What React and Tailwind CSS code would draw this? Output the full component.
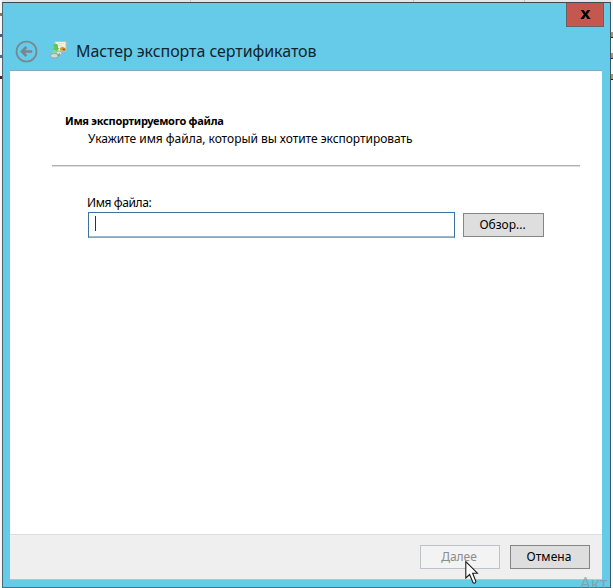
import React from 'react';

const leftMarks = [
  { id: 'a', className: 'mt-[13px] bg-[#8a7a5c]' },
  { id: 'b', className: 'mt-[18px] bg-[#4a5f8f]' },
  { id: 'c', className: 'mt-[18px] bg-[#4b6b9c]' },
  { id: 'd', className: 'mt-[18px] bg-[#4a1f2e]' },
];

export default function App() {
  return (
    <div className="relative flex h-[588px] w-[613px] overflow-hidden bg-[#f8f8f8] font-['Noto_Sans','Open_Sans',sans-serif] text-black">
      <div className="w-[2px] shrink-0">
        {leftMarks.map((mark) => (
          <div key={mark.id} className={`h-[3px] w-[2px] ${mark.className}`} />
        ))}
      </div>
      <div className="flex min-w-0 flex-1 flex-col">
        <TableEdge />
        <Wizard />
      </div>
      <RightEdge />
      <svg className="absolute top-[560px] left-[465px]" width="15" height="26" viewBox="0 0 15 26">
        <path d="M.8 1.5V18L4.6 14.5L7.9 22.2Q8.5 23.6 9.8 23L10.3 22.6Q11.1 22 10.6 20.7L7.6 13.2H12.4Z" fill="#fff" stroke="#1b1b1b" strokeWidth="1.1" />
      </svg>
      <div className="absolute top-[573px] left-[580px] text-[17px] leading-5 whitespace-nowrap text-[#8b9499]/70">Акт</div>
    </div>
  );
}

function TableEdge() {
  return (
    <div className="flex h-[2px] shrink-0 bg-[#e6e6e6]">
      <div className="w-[189px] border-r border-[#c4c4c4]" />
      <div className="w-[223px] border-r border-[#c4c4c4]" />
      <div className="w-[111px] border-r border-[#c4c4c4]" />
    </div>
  );
}

function Wizard() {
  return (
    <div className="flex flex-1 flex-col border border-t-[#3f4a50] border-r-[#3d5561] border-b-[#4c7180] border-l-[#4c6570] bg-[#66cae9] pr-[8px] pb-[7px] pl-[7px]">
      <header className="flex h-[67px] shrink-0 flex-col">
        <div className="flex h-[24px] justify-end">
          <button aria-label="Закрыть" className="mr-[-2px] flex h-[24px] w-[38px] items-center justify-center border border-t-0 border-[#6c5f65] bg-[#c4584f]">
            <svg className="mt-[-1px]" width="11" height="9" viewBox="0 0 12 10" fill="#000">
              <path d="M.5 0H4L6 3.1L8 0H11.5L7.8 4.9L11.8 10H8.1L6 6.8L3.9 10H.2L4.2 4.9Z" />
            </svg>
          </button>
        </div>
        <div className="flex h-[43px] pl-[5px]">
          <BackIcon />
          <CertificateIcon />
          <h1 className="mt-[12px] ml-[8px] text-[16px] leading-[24px] tracking-[-0.07px] whitespace-nowrap text-[#10262e]">Мастер экспорта сертификатов</h1>
        </div>
      </header>
      <main className="flex flex-1 flex-col border-t border-[#87a8c4] bg-white text-[12px]">
        <div className="flex-1 pt-[41px] pl-[42px]">
          <h2 className="pl-[13px] text-[11px] leading-[18px] font-bold tracking-[-0.28px] whitespace-nowrap">Имя экспортируемого файла</h2>
          <p className="pl-[36px] leading-[18px] tracking-[-0.04px] whitespace-nowrap">Укажите имя файла, который вы хотите экспортировать</p>
          <div className="mt-[17px] h-[2px] w-[528px] border-t border-[#b0b0b0] bg-[#dedede]" />
          <label className="mt-[27px] block pl-[35px] leading-[18px] tracking-[-0.4px]">Имя файла:</label>
          <div className="flex items-center pl-[36px]">
            <div className="h-[26px] w-[367px] border border-[#3f719c] border-b-[#83a6c4] bg-white pt-[3px] pl-[6px] shadow-[inset_0_-1px_0_#9db9d0]">
              <div className="h-[15px] w-px bg-[#333]" />
            </div>
            <button className="ml-[8px] h-[24px] w-[81px] border border-[#858585] bg-[#dedede] pr-[2px] leading-[22px]">Обзор...</button>
          </div>
        </div>
        <footer className="flex h-[46px] shrink-0 justify-end border-t border-b border-t-[#dedede] border-b-[#b6c6cc] bg-[#efefef] pt-[10px] pr-[12px]">
          <button disabled className="h-[24px] w-[80px] border border-[#bdc3c8] bg-[#f3f3f3] pr-[2px] leading-[22px] text-[#8c8c8c]">Далее</button>
          <button className="ml-[10px] h-[24px] w-[80px] border border-[#858585] bg-[#dedede] pr-[2px] leading-[22px] tracking-[0.1px]">Отмена</button>
        </footer>
      </main>
    </div>
  );
}

function BackIcon() {
  return (
    <svg className="mt-[13px] shrink-0" width="23" height="23" viewBox="0 0 23 23" fill="none" stroke="#7b868c">
      <circle cx="11.5" cy="11.5" r="10" strokeWidth="1.7" />
      <path d="M17.2 11.5H7M11.4 7L6.9 11.5L11.4 16" strokeWidth="2.6" />
    </svg>
  );
}

function CertificateIcon() {
  return (
    <svg className="mt-[13px] ml-[11px] shrink-0" width="19" height="20" viewBox="0 0 19 20">
      <path d="M6 1.5H17V11H6Z" fill="#f3f0e6" stroke="#cfbea0" />
      <path d="M9 3.5H15M9 5.5H13" stroke="#e2e0d6" />
      <path d="M11 10.5V8L13.5 6.5L16 8V10.5Z" fill="#d6a32c" />
      <path d="M13.5 8.5H16.5V10.5H13.5Z" fill="#a5602a" />
      <path d="M7 12L10 11L13 12.5L12 15H8Z" fill="#dfe3e1" stroke="#9bacae" strokeWidth=".7" />
      <path d="M.8 15.5L4 13.5L9 14L10 16L7 18L3 17.8Z" fill="#d4d9d8" stroke="#8c9ea1" strokeWidth=".8" />
      <path d="M4 5L7 3.5L9 5V8H10.5L7.5 11.5L3.5 9L5.5 8Z" fill="#57c95c" />
      <path d="M3 13L4.5 9.5L7.5 11L6 13.5Z" fill="#8edb84" />
      <path d="M8 15L11 13V15L9 16.5Z" fill="#5bbb55" />
    </svg>
  );
}

function RightEdge() {
  return (
    <div className="w-[2px] shrink-0 pt-[32px]">
      {[0, 1, 2].map((row) => (
        <div key={row} className="mb-[15px] h-[6px] w-[2px] border-b border-[#282038] bg-[#b78e65]" />
      ))}
    </div>
  );
}
